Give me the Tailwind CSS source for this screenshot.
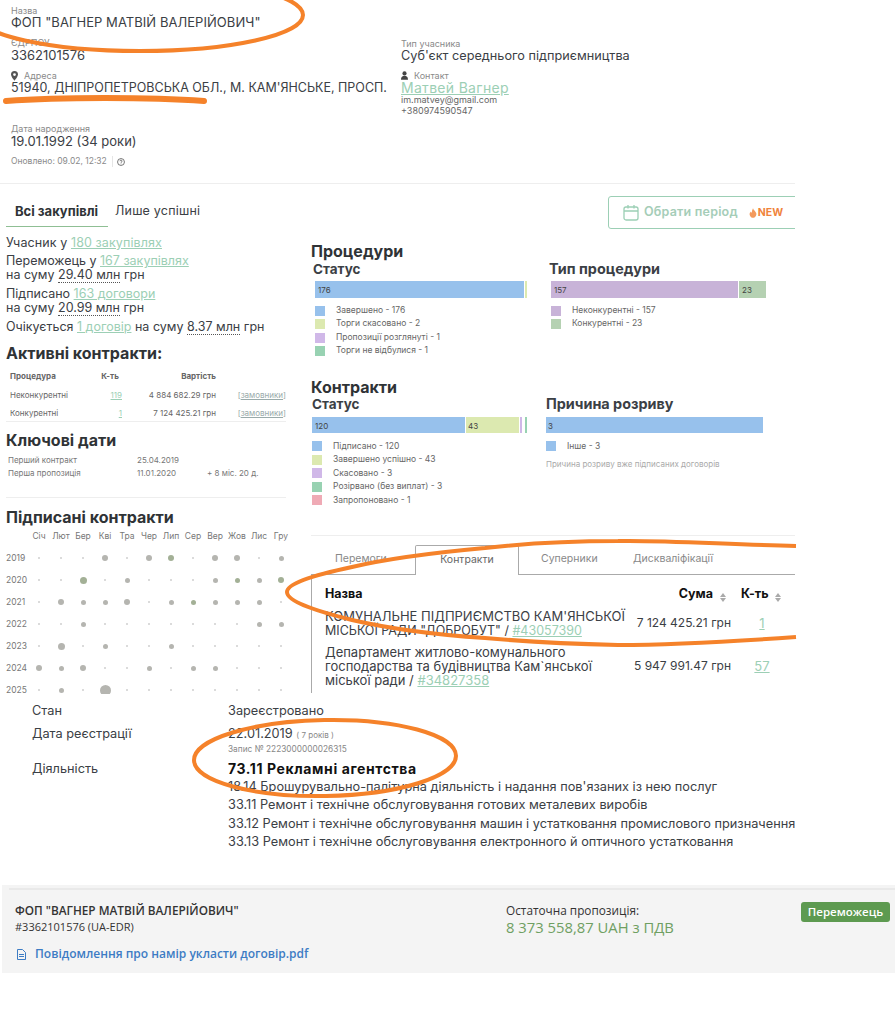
<!DOCTYPE html>
<html lang="en">

<head>
    <meta charset="UTF-8">
    <meta name="viewport" content="width=device-width, initial-scale=1.0">
    <title>ФОП Вагнер</title>
    <script src="https://cdn.jsdelivr.net/npm/@tailwindcss/browser@4"></script>
</head>

<body class="bg-white">
    <div class="relative w-[895px] h-[1024px] overflow-hidden font-[Inter,sans-serif] text-[#3b4045]">

        <!-- Header -->
        <div class="w-[795px] h-[184px] border-b border-[#eeeeee] flex">
            <div class="w-[401px] pl-[11px] shrink-0">
                <div class="text-[9px] leading-[11px] text-[#8a8a8a] pt-[5px] h-[16px]">Назва</div>
                <div class="text-[13px] leading-[13px] tracking-[0.05px]">ФОП "ВАГНЕР МАТВІЙ ВАЛЕРІЙОВИЧ"</div>
                <div class="text-[9px] leading-[11px] text-[#8a8a8a] mt-[8px]">ЄДРПОУ</div>
                <div class="text-[13px] leading-[14px]">3362101576</div>
                <div class="flex items-center gap-[6px] text-[9px] leading-[11px] text-[#8a8a8a] mt-[8px]">
                    <svg class="w-[7px] h-[10px]" viewBox="0 0 10 14"><path fill="#555" fill-rule="evenodd" d="M5 0a5 5 0 0 1 5 5c0 3-5 9-5 9S0 8 0 5a5 5 0 0 1 5-5zm0 3a2 2 0 1 0 0 4 2 2 0 0 0 0-4z"/></svg>
                    <span>Адреса</span>
                </div>
                <div class="text-[12.5px] leading-[14px] whitespace-nowrap">51940, ДНІПРОПЕТРОВСЬКА ОБЛ., М. КАМ'ЯНСЬКЕ, ПРОСП.</div>
                <div class="text-[9px] leading-[11px] text-[#8a8a8a] mt-[28px]">Дата народження</div>
                <div class="text-[13px] leading-[14px]">19.01.1992 (34 роки)</div>
                <div class="flex items-center text-[8.5px] leading-[11px] text-[#8a8a8a] mt-[8px]">
                    <span class="pr-[5px] border-r border-[#e5e5e5]">Оновлено: 09.02, 12:32</span>
                    <svg class="w-[8px] h-[8px] ml-[4px]" viewBox="0 0 10 10" fill="none" stroke="#555"><circle cx="5" cy="5" r="4.3"/><path d="M3.7 4a1.3 1.3 0 1 1 1.8 1.2c-.4.2-.5.4-.5.8M5 7v.7"/></svg>
                </div>
            </div>
            <div class="pt-[38px]">
                <div class="text-[9px] leading-[11px] text-[#8a8a8a]">Тип учасника</div>
                <div class="text-[12.7px] leading-[14px]">Суб'єкт середнього підприємництва</div>
                <div class="flex items-center gap-[6px] text-[9px] leading-[11px] text-[#8a8a8a] mt-[7px]">
                    <svg class="w-[7px] h-[9px]" viewBox="0 0 10 12"><circle cx="5" cy="3" r="3" fill="#444"/><path fill="#444" d="M0 12c0-4 2-5.5 5-5.5S10 8 10 12z"/></svg>
                    <span>Контакт</span>
                </div>
                <div class="text-[14px] leading-[14px] tracking-[0.3px] text-[#9ccfb5] underline">Матвей Вагнер</div>
                <div class="text-[9px] leading-[10px] text-[#666]">im.matvey@gmail.com</div>
                <div class="text-[9px] leading-[10px] mt-[1px] text-[#666]">+380974590547</div>
            </div>
        </div>

        <!-- Main two columns -->
        <div class="w-[795px] h-[510px] overflow-hidden flex">

            <!-- Left column -->
            <div class="w-[311px] shrink-0 pl-[6px]">
                <div class="flex items-end h-[43px] w-[280px]">
                    <div class="w-[102px] h-[33px] border-b border-[#8fbf94] pl-[9px] text-[13px] leading-[34px] font-bold text-[#2f3336]">Всі закупівлі</div>
                    <div class="h-[33px] pl-[7px] text-[12.5px] leading-[34px] tracking-[0.2px]">Лише успішні</div>
                </div>
                <div class="text-[12.5px] leading-[14px] mt-[9px]">
                    <div class="tracking-[0.1px]">Учасник у <span class="text-[#9ccfb5] underline">180 закупівлях</span></div>
                    <div class="mt-[4px]">Переможець у <span class="text-[#9ccfb5] underline">167 закупівлях</span></div>
                    <div>на суму <span class="border-b border-dotted border-[#555]">29.40 млн</span> грн</div>
                    <div class="mt-[5px]">Підписано <span class="text-[#9ccfb5] underline">163 договори</span></div>
                    <div>на суму <span class="border-b border-dotted border-[#555]">20.99 млн</span> грн</div>
                    <div class="mt-[5px] whitespace-nowrap">Очікується <span class="text-[#9ccfb5] underline">1 договір</span> на суму <span class="border-b border-dotted border-[#555]">8.37 млн</span> грн</div>
                </div>
                <h3 class="text-[16px] leading-[18px] font-bold text-[#2f3336] mt-[10px]">Активні контракти:</h3>

                <div class="w-[280px] border-b border-[#eeeeee] h-[60px] text-[8px] leading-[10px] text-[#666] pt-[9px]">
                    <div class="grid grid-cols-[88px_32px_90px_70px] font-bold">
                        <span class="pl-[4px]">Процедура</span><span class="text-center">К-ть</span><span class="text-right">Вартість</span><span></span>
                    </div>
                    <div class="grid grid-cols-[88px_32px_90px_70px] mt-[9px]">
                        <span class="pl-[4px]">Неконкурентні</span><span class="text-[#9ccfb5] underline text-right pr-[4px]">119</span><span class="text-right whitespace-nowrap">4 884 682.29 грн</span><span class="text-right text-[#9aa] whitespace-nowrap">[<span class="underline">замовники</span>]</span>
                    </div>
                    <div class="grid grid-cols-[88px_32px_90px_70px] mt-[8px]">
                        <span class="pl-[4px]">Конкурентні</span><span class="text-[#9ccfb5] underline text-right pr-[4px]">1</span><span class="text-right whitespace-nowrap">7 124 425.21 грн</span><span class="text-right text-[#9aa] whitespace-nowrap">[<span class="underline">замовники</span>]</span>
                    </div>
                </div>

                <h3 class="text-[16px] leading-[18px] font-bold text-[#2f3336] mt-[9px]">Ключові дати</h3>
                <div class="w-[280px] h-[49px] border-b border-[#eeeeee] text-[8px] leading-[13px] text-[#777] pt-[5px]">
                    <div class="grid grid-cols-[129px_70px_70px] pl-[2px]"><span>Перший контракт</span><span>25.04.2019</span><span></span></div>
                    <div class="grid grid-cols-[129px_70px_70px] pl-[2px]"><span>Перша пропозиція</span><span>11.01.2020</span><span>+ 8 міс. 20 д.</span></div>
                </div>

                <h3 class="text-[16px] leading-[18px] font-bold text-[#2f3336] mt-[10px]">Підписані контракти</h3>
                <div id="calendar" class="w-[285px] grid grid-cols-[22px_repeat(12,22px)] text-[8.5px] text-[#777]"></div>
            </div>

            <!-- Right column -->
            <div class="flex-1 min-w-0">
                <h3 class="text-[16px] leading-[18px] font-bold text-[#2f3336] mt-[58px]">Процедури</h3>
                <div class="flex mt-[1px]">
                    <div class="w-[238px] shrink-0 pl-[2px]">
                        <div class="text-[13.5px] leading-[16px] font-bold text-[#3b4045]">Статус</div>
                        <div class="flex h-[17px] w-[212px] ml-[2px] mt-[4px] gap-[1px] text-[8px] leading-[19px] text-[#444]">
                            <div class="bg-[#97c1ec] w-[209px] pl-[3px]">176</div>
                            <div class="bg-[#dce9b0] w-[2px]"></div>
                        </div>
                        <div class="mt-[6px] ml-[2px] text-[8.5px] leading-[13.400px] text-[#666]">
                            <div class="flex items-center gap-[11px]"><span class="w-[10px] h-[10px] bg-[#97c1ec]"></span>Завершено - 176</div>
                            <div class="flex items-center gap-[11px]"><span class="w-[10px] h-[10px] bg-[#dce9b0]"></span>Торги скасовано - 2</div>
                            <div class="flex items-center gap-[11px]"><span class="w-[10px] h-[10px] bg-[#d0b8e8]"></span>Пропозиції розглянуті - 1</div>
                            <div class="flex items-center gap-[11px]"><span class="w-[10px] h-[10px] bg-[#98d2b2]"></span>Торги не відбулися - 1</div>
                        </div>
                    </div>
                    <div>
                        <div class="text-[14.400px] leading-[16px] font-bold text-[#3b4045]">Тип процедури</div>
                        <div class="flex h-[17px] w-[216px] ml-[2px] mt-[4px] gap-[1px] text-[8px] leading-[19px] text-[#444]">
                            <div class="bg-[#c8b3d8] w-[187px] pl-[3px]">157</div>
                            <div class="bg-[#b5d1b2] w-[27px] pl-[3px]">23</div>
                        </div>
                        <div class="mt-[6px] ml-[2px] text-[8.5px] leading-[13.400px] text-[#666]">
                            <div class="flex items-center gap-[11px]"><span class="w-[10px] h-[10px] bg-[#c8b3d8]"></span>Неконкурентні - 157</div>
                            <div class="flex items-center gap-[11px]"><span class="w-[10px] h-[10px] bg-[#b5d1b2]"></span>Конкурентні - 23</div>
                        </div>
                    </div>
                </div>

                <h3 class="text-[16px] leading-[18px] font-bold text-[#2f3336] mt-[20px]">Контракти</h3>
                <div class="flex">
                    <div class="w-[235px] shrink-0 pl-[1px]">
                        <div class="text-[13.5px] leading-[16px] font-bold text-[#3b4045]">Статус</div>
                        <div class="flex h-[16px] w-[216px] mt-[5px] gap-[1px] text-[8px] leading-[18px] text-[#444]">
                            <div class="bg-[#97c1ec] w-[153px] pl-[3px]">120</div>
                            <div class="bg-[#dce9b0] w-[53px] pl-[2px]">43</div>
                            <div class="bg-[#d0b8e8] w-[2px]"></div>
                            <div class="w-[1px]"></div>
                            <div class="bg-[#98d2b2] w-[2px]"></div>
                        </div>
                        <div class="mt-[7px] text-[8.5px] leading-[13.500px] text-[#666]">
                            <div class="flex items-center gap-[11px]"><span class="w-[10px] h-[10px] bg-[#97c1ec]"></span>Підписано - 120</div>
                            <div class="flex items-center gap-[11px]"><span class="w-[10px] h-[10px] bg-[#dce9b0]"></span>Завершено успішно - 43</div>
                            <div class="flex items-center gap-[11px]"><span class="w-[10px] h-[10px] bg-[#d0b8e8]"></span>Скасовано - 3</div>
                            <div class="flex items-center gap-[11px]"><span class="w-[10px] h-[10px] bg-[#98d2b2]"></span>Розірвано (без виплат) - 3</div>
                            <div class="flex items-center gap-[11px]"><span class="w-[10px] h-[10px] bg-[#efaab5]"></span>Запропоновано - 1</div>
                        </div>
                    </div>
                    <div>
                        <div class="text-[14.400px] leading-[16px] font-bold text-[#3b4045]">Причина розриву</div>
                        <div class="h-[16px] w-[217px] mt-[5px] bg-[#97c1ec] pl-[2px] text-[8px] leading-[18px] text-[#444]">3</div>
                        <div class="mt-[7px] text-[8.5px] leading-[13.500px] text-[#666]">
                            <div class="flex items-center gap-[11px]"><span class="w-[10px] h-[10px] bg-[#97c1ec]"></span>Інше - 3</div>
                        </div>
                        <div class="text-[8px] leading-[10px] text-[#aaa] mt-[6px] whitespace-nowrap">Причина розриву вже підписаних договорів</div>
                    </div>
                </div>

                <!-- Tabs + table -->
                <div class="absolute left-[311px] top-[535px] w-[484px] h-[158px] overflow-hidden">
                    <div class="border-t border-[#eeeeee] h-[10px]"></div>
                    <div class="flex h-[30px] border-b border-[#aaaaaa] text-[10.5px] leading-[27px] text-[#888] pl-[13px]">
                        <div class="w-[91px] pl-[11px]">Перемоги</div>
                        <div class="w-[104px] h-[30px] bg-white border border-[#aaaaaa] border-b-0 rounded-t-[2px] text-center text-[#666]">Контракти</div>
                        <div class="w-[114px] pl-[22px]">Суперники</div>
                        <div>Дискваліфікації</div>
                    </div>
                    <div class="border-l border-[#aaaaaa] h-[118px] pl-[13px]">
                        <div class="flex pt-[11px] h-[33px] text-[12.5px] leading-[15px] font-bold text-[#111]">
                            <div class="w-[340px]">Назва</div>
                            <div class="w-[48px] text-right">Сума</div>
                            <div class="w-[20px] flex flex-col items-center justify-center gap-[1px]"><span class="border-x-[3.5px] border-x-transparent border-b-[4px] border-b-[#aaa]"></span><span class="border-x-[3.5px] border-x-transparent border-t-[4px] border-t-[#aaa]"></span></div>
                            <div class="ml-[8px] w-[32px]">К-ть</div>
                            <div class="w-[10px] flex flex-col items-center justify-center gap-[1px]"><span class="border-x-[3.5px] border-x-transparent border-b-[4px] border-b-[#aaa]"></span><span class="border-x-[3.5px] border-x-transparent border-t-[4px] border-t-[#aaa]"></span></div>
                        </div>
                        <div class="flex items-center h-[30px] text-[13px] leading-[14px]">
                            <div class="w-[304px] shrink-0 whitespace-nowrap">КОМУНАЛЬНЕ ПІДПРИЄМСТВО КАМ'ЯНСЬКОЇ<br><span class="text-[12.500px]">МІСЬКОЇ РАДИ "ДОБРОБУТ" / </span><span class="text-[#9ccfb5] underline text-[12.500px]">#43057390</span></div>
                            <div class="w-[102px] text-right text-[12px] whitespace-nowrap">7 124 425.21 грн</div>
                            <div class="w-[62px] text-center text-[#9ccfb5] underline text-[13px]">1</div>
                        </div>
                        <div class="flex items-center h-[43px] mt-[6px] text-[13px] leading-[14px]">
                            <div class="w-[304px] shrink-0 whitespace-nowrap">Департамент житлово-комунального<br>господарства та будівництва Кам`янської<br>міської ради / <span class="text-[#9ccfb5] underline">#34827358</span></div>
                            <div class="w-[102px] text-right text-[12px] whitespace-nowrap">5 947 991.47 грн</div>
                            <div class="w-[62px] text-center text-[#9ccfb5] underline text-[13px]">57</div>
                        </div>
                    </div>
                </div>
            </div>
        </div>

        <!-- Period button, clipped by the right edge of the content -->
        <div class="absolute left-[608px] top-[196px] w-[187px] h-[33px] overflow-hidden">
            <div class="w-[200px] h-[33px] border border-[#9ccfb5] rounded-[3px] flex items-center pl-[14px] text-[#a5cdb8] text-[12.5px] font-semibold">
                <svg class="w-[16px] h-[17px] mr-[5px]" viewBox="0 0 16 17" fill="none" stroke="#9ccfb5" stroke-width="1.3"><rect x="1" y="3" width="14" height="13" rx="2"/><path d="M1 7h14M5 1v3.5M11 1v3.5"/></svg>
                <span class="tracking-[0.2px]">Обрати період</span>
                <svg class="w-[8px] h-[10px] ml-[11px] mr-[1px]" viewBox="0 0 10 12"><path fill="#f39a5c" d="M5 0c.5 2 3 3.500 4 6 1 3-1.500 6-4 6s-5-3-4-6c.4-1 1-1.500 1.500-2 .2 1 .6 1.500 1 1.700C3.500 4 4 2 5 0z"/></svg>
                <span class="text-[10.5px] font-bold text-[#f0843c]">NEW</span>
            </div>
        </div>

        <!-- Registration data -->
        <div class="w-[795px] h-[191px] pl-[32px] pt-[8px] text-[12.75px] leading-[18px] whitespace-nowrap overflow-hidden">
            <div class="flex"><div class="w-[196px]">Стан</div><div>Зареєстровано</div></div>
            <div class="flex mt-[5px]"><div class="w-[196px]">Дата реєстрації</div><div>22.01.2019 <span class="text-[8px] text-[#888]">( 7 років )</span></div></div>
            <div class="pl-[196px] text-[8.3px] leading-[12px] text-[#888] -mt-[1px]">Запис № 2223000000026315</div>
            <div class="flex mt-[5px]">
                <div class="w-[196px] shrink-0">Діяльність</div>
                <div>
                    <div class="font-bold text-[14px] tracking-[0.6px] text-[#111]">73.11 Рекламні агентства</div>
                    <div class="leading-[18.300px]">18.14 Брошурувально-палітурна діяльність і надання пов'язаних із нею послуг</div>
                    <div class="leading-[18.300px]">33.11 Ремонт і технічне обслуговування готових металевих виробів</div>
                    <div class="leading-[18.300px]">33.12 Ремонт і технічне обслуговування машин і устатковання промислового призначення</div>
                    <div class="leading-[18.300px]">33.13 Ремонт і технічне обслуговування електронного й оптичного устатковання</div>
                </div>
            </div>
        </div>

        <!-- Winner panel -->
        <div class="ml-[2px] w-[893px] h-[88px] bg-[#f4f4f4] pl-[7px] pt-[3px] font-['Open_Sans',sans-serif] text-[#333]">
            <div class="border-t-2 border-[#e9e9e9] pl-[6px] pt-[12px] flex">
                <div class="w-[491px] shrink-0">
                    <div class="text-[11.8px] leading-[16px] font-semibold">ФОП "ВАГНЕР МАТВІЙ ВАЛЕРІЙОВИЧ"</div>
                    <div class="text-[11px] leading-[16px] mt-[1px]">#3362101576 (UA-EDR)</div>
                    <div class="flex items-center text-[12px] leading-[16px] font-semibold text-[#3d7cc4] mt-[11px] pl-[2px]">
                        <svg class="w-[9px] h-[11px] mr-[9px]" viewBox="0 0 9 11" fill="none" stroke="#3d7cc4"><path d="M.5.500h5l3 3v7h-8zM2 5.500h5M2 7.500h5"/></svg>
                        <span>Повідомлення про намір укласти договір.pdf</span>
                    </div>
                </div>
                <div class="w-[295px] shrink-0">
                    <div class="text-[11.8px] leading-[16px]">Остаточна пропозиція:</div>
                    <div class="text-[14.800px] leading-[18px] text-[#6f9f62]">8 373 558,87 UAH з ПДВ</div>
                </div>
                <div class="w-[89px] h-[20px] bg-[#5d9a50] rounded-[3px] text-white text-[11.5px] leading-[20px] text-center font-semibold">Переможець</div>
            </div>
        </div>

        <!-- Hand drawn annotations on top of the screenshot -->
        <svg class="absolute left-0 top-0 pointer-events-none" width="895" height="1024" fill="none" stroke="#f5822a" stroke-width="4">
            <ellipse cx="140" cy="15" rx="163" ry="36"/>
            <path stroke-width="6" stroke-linecap="round" d="M6 101 C60 97 150 97 204 101"/>
            <path d="M796 546 C720 544 660 540 618 541 C560 541 520 544 485 548 C430 553 390 558 352 567 C310 576 287 584 287 592 C287 602 320 612 352 620 C395 630 440 635 485 638 C530 642 575 644 618 645 C680 645 740 641 796 637"/>
            <ellipse cx="325" cy="758" rx="131" ry="38" transform="rotate(-1 325 758)"/>
        </svg>
    </div>

    <script>
        // dot sizes per month, 2 is an empty month
        const months = ["Січ", "Лют", "Бер", "Кві", "Тра", "Чер", "Лип", "Сер", "Вер", "Жов", "Лис", "Гру"];
        const years = {
            2019: [2, 2, 2, 6, 2, 6, 6, 2, 6, 6, 2, 5],
            2020: [2, 2, 7, 2, 5, 2, 2, 2, 5, 5, 5, 6],
            2021: [2, 6, 5, 5, 6, 2, 5, 5, 5, 5, 5, 2],
            2022: [2, 2, 5, 2, 2, 2, 2, 2, 2, 2, 5, 5],
            2023: [2, 7, 2, 5, 2, 2, 5, 2, 2, 2, 2, 2],
            2024: [6, 5, 6, 2, 2, 5, 2, 5, 5, 2, 2, 2],
            2025: [2, 5, 2, 11, 2, 2, 2, 2, 2, 2, 2, 2]
        };
        // months where the dot has a green tint
        const tinted = ["2019-6", "2020-2", "2020-9", "2020-11", "2021-7"];
        let html = "<span></span>";
        months.forEach(function (m) {
            html += '<span class="text-center leading-[21px]">' + m + "</span>";
        });
        Object.keys(years).forEach(function (year) {
            html += '<span class="h-[22px] leading-[22px]">' + year + "</span>";
            years[year].forEach(function (size, i) {
                let color = size > 2 ? "#b5b5b0" : "#cfcfcf";
                if (tinted.includes(year + "-" + i)) color = "#a3b096";
                html += '<span class="h-[22px] flex items-center justify-center"><span class="rounded-full" style="width:' + size + "px;height:" + size + "px;background:" + color + '"></span></span>';
            });
        });
        document.getElementById("calendar").innerHTML = html;
    </script>
</body>

</html>
